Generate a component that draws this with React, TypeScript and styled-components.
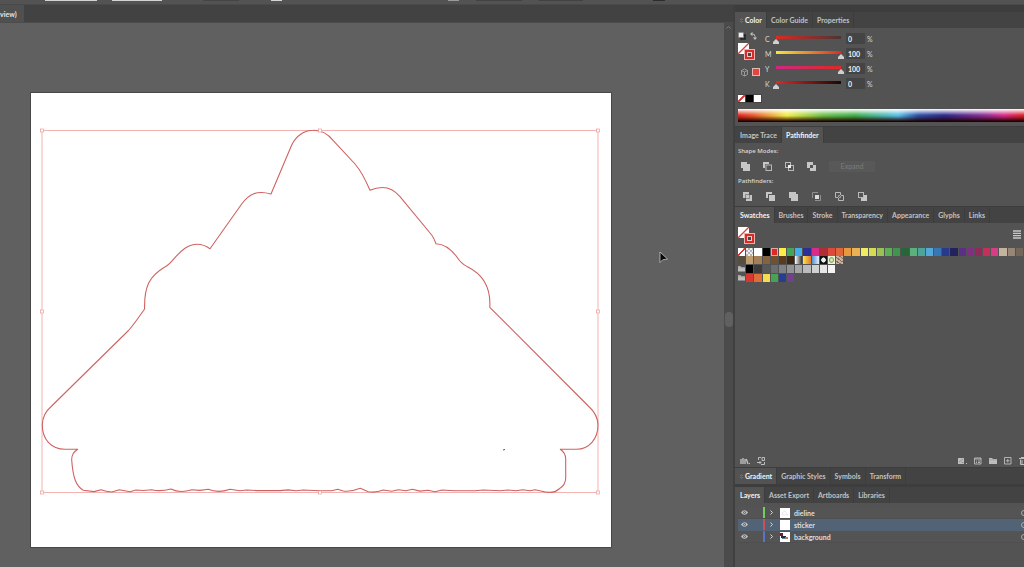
import React from "react";
import styled, { createGlobalStyle } from "styled-components";

const GlobalStyle = createGlobalStyle`
  * { box-sizing: border-box; }
  body { margin: 0; background: #535353; overflow: hidden; }
  button, input { font: inherit; color: inherit; border: 0; padding: 0; margin: 0; background: none; }
`;

const Screen = styled.div`
  display: flex;
  flex-direction: column;
  height: 100vh;
  font: 400 7px/10px Lato, "Open Sans", sans-serif;
  color: #d6d6d6;
`;

const OptionsBar = styled.header`
  display: flex;
  flex: none;
  height: 5px;
  background: #535353;
  border-bottom: 1px solid #4a4a4a;
`;

const OptionField = styled.span<{ $gap: number; $width: number; $color: string }>`
  width: ${(p) => p.$width}px;
  height: 1px;
  margin-left: ${(p) => p.$gap}px;
  background: ${(p) => p.$color};
`;

const Workspace = styled.div`
  display: flex;
  flex: 1;
  min-height: 0;
`;

const DocumentArea = styled.main`
  display: flex;
  flex: 1;
  flex-direction: column;
  min-width: 0;
`;

const DocumentTabs = styled.div`
  display: flex;
  flex: none;
  height: 18px;
  background: #424242;
  border-bottom: 1px solid #4c4c4c;
`;

const DocumentTab = styled.button`
  padding-right: 7px;
  background: #505050;
  color: #e6e6e6;
  font-weight: 700;
`;

const CanvasRow = styled.div`
  display: flex;
  flex: 1;
  min-height: 0;
`;

const Canvas = styled.div`
  position: relative;
  flex: 1;
  min-width: 0;
  padding: 70px 113px 20px 31px;
  overflow: hidden;
  background: #606060;
`;

const Artboard = styled.svg`
  display: block;
  width: 100%;
  background: #fff;
  outline: 1px solid #484848;
`;

const Cursor = styled.svg`
  position: absolute;
  left: 659px;
  top: 228px;
  width: 9px;
  height: 13px;
`;

const ScrollRail = styled.div`
  display: flex;
  flex-direction: column;
  align-items: center;
  justify-content: space-between;
  width: 9px;
  padding: 3px 0 240px;
  background: #4b4b4b;
`;

const ScrollThumb = styled.span`
  width: 8px;
  height: 15px;
  border-radius: 4px;
  background: #606060;
`;

const Dock = styled.aside`
  display: flex;
  flex: none;
  flex-direction: column;
  gap: 1px;
  width: 291px;
  padding-top: 7px;
  border-left: 2px solid #404040;
  background: #3d3d3d;
`;

const Group = styled.section<{ $grow?: boolean; $collapsed?: boolean }>`
  display: flex;
  flex: ${(p) => (p.$grow ? "1" : "none")};
  flex-direction: column;
  min-height: 0;
  padding-bottom: ${(p) => (p.$collapsed ? 2 : 0)}px;
`;

const TabBar = styled.div`
  display: flex;
  flex: none;
  height: 16px;
  background: #434343;
`;

const Tab = styled.button<{ $active: boolean }>`
  display: flex;
  align-items: center;
  gap: 2px;
  padding: 0 4px;
  border-right: 1px solid #3d3d3d;
  background: ${(p) => (p.$active ? "#535353" : "transparent")};
  color: ${(p) => (p.$active ? "#f4f4f4" : "#c2c2c2")};
  font-weight: 700;
  white-space: nowrap;

  &:first-child { padding-left: 5px; }
  &:has(svg) { padding-left: 3px; }
`;

const Body = styled.div<{ $height?: number }>`
  display: flex;
  flex: ${(p) => (p.$height ? "none" : "1")};
  flex-direction: column;
  min-height: 0;
  height: ${(p) => (p.$height ? `${p.$height}px` : "auto")};
  padding: 3px 0 0 3px;
  background: #535353;
`;

const ColorControls = styled.div`
  display: flex;
  gap: 3px;
  height: 63px;
`;

const ColorTools = styled.div`
  display: flex;
  flex-direction: column;
  width: 24px;
  gap: 3px;
`;

const Sliders = styled.div`
  display: flex;
  flex-direction: column;
`;

const SliderRow = styled.div`
  display: flex;
  align-items: center;
  height: 15px;
`;

const SliderLabel = styled.label`
  width: 8px;
`;

const Range = styled.input<{ $from: string; $to: string }>`
  appearance: none;
  width: 71px;
  height: 11px;
  background: linear-gradient(90deg, ${(p) => p.$from}, ${(p) => p.$to}) 3px 3px / calc(100% - 6px) 3px no-repeat;

  &::-webkit-slider-thumb {
    appearance: none;
    width: 6px;
    height: 5px;
    margin-top: 6px;
    background: #d0d0d0;
    clip-path: polygon(50% 0, 100% 60%, 100% 100%, 0 100%, 0 60%);
  }
`;

const NumberBox = styled.input`
  width: 19px;
  height: 11px;
  margin: 0 2px;
  padding-left: 2px;
  background: #444;
  color: #f0f0f0;
  font-weight: 700;
`;

const MiniSwatches = styled.div`
  display: flex;
  gap: 1px;
  width: 24px;
  height: 9px;
  padding-top: 1px;
  background: #444;
`;

const Spectrum = styled.div`
  height: 13px;
  margin-top: 6px;
  background:
    linear-gradient(180deg, #fff 0, #fff0 48%, #0000 52%, #200 95%),
    linear-gradient(90deg, #e0281c 0%, #e8542c 5%, #f3ed42 17%, #6abf49 30%, #3fae49 41%, #55bfe8 56%, #2c50a8 63%, #2c2a8c 72%, #8c2f95 86%, #d92b88 93%, #de2430 99%);
`;

const Caption = styled.span`
  height: 10px;
  font-family: "Open Sans", sans-serif;
  font-size: 6px;
  font-weight: 600;
`;

const IconRow = styled.div<{ $gap: number }>`
  display: flex;
  align-items: center;
  gap: ${(p) => p.$gap}px;
  height: 20px;
  padding-left: ${(p) => (p.$gap === 13 ? 3 : 5)}px;
`;

const IconButton = styled.button`
  display: flex;
  flex: none;

  svg { display: block; }
`;

const ExpandButton = styled.button`
  width: 46px;
  height: 11px;
  background: #585858;
  color: #7c7c7c;
`;

const SwatchHead = styled.div`
  display: flex;
  justify-content: space-between;
  height: 21px;
  padding: 1px 3px 0 0;
`;

const ListViewButton = styled(IconButton)`
  align-items: center;
  height: 14px;
`;

const SwatchGrid = styled.div<{ $spaced?: boolean }>`
  display: grid;
  grid-template-columns: repeat(35, 1fr);
  gap: 1px;
  height: 8px;
  margin: ${(p) => (p.$spaced ? "1px" : "0")} 1px 0 0;
`;

const Swatch = styled.button<{ $fill: string; $selected?: boolean }>`
  height: 8px;
  background: ${(p) => p.$fill};
  outline: ${(p) => (p.$selected ? "1px solid #e9a5a0" : "none")};
  outline-offset: -1px;
`;

const MiniSwatch = styled(Swatch)`
  width: 7px;
  height: 7px;
`;

const SwatchFooter = styled.footer`
  display: flex;
  align-items: center;
  justify-content: space-between;
  height: 13px;
  margin-top: auto;
  padding-left: 2px;
`;

const FooterIcons = styled.div`
  display: flex;
  gap: 7px;
`;

const LayerList = styled.ul`
  margin: 0;
  padding: 1px 0 0;
  list-style: none;
`;

const LayerRow = styled.li<{ $selected: boolean }>`
  display: flex;
  align-items: center;
  height: 12px;
  background: ${(p) => (p.$selected ? "#526376" : "#545454")};
  border-bottom: 1px solid ${(p) => (p.$selected ? "#526376" : "#4f4f4f")};
  color: #dedede;
`;

const EyeCell = styled(IconButton)`
  justify-content: center;
  width: 12px;
`;

const LayerColor = styled.span<{ $color: string }>`
  width: 2px;
  height: 11px;
  margin-left: 13px;
  background: ${(p) => p.$color};
`;

const Disclosure = styled(IconButton)`
  justify-content: center;
  width: 12px;
`;

const LayerThumb = styled.svg`
  width: 10px;
  height: 10px;
  margin: 0 4px 0 3px;
  background: #fff;
`;

const LayerName = styled.span`
  flex: 1;
  font-weight: 700;
`;

const Target = styled.button`
  width: 6px;
  height: 6px;
  margin-right: -3px;
  border: 1px solid #aaa;
  border-radius: 50%;
`;

const none = "linear-gradient(to top left, #fff 42%, #d33 43%, #d33 57%, #fff 58%)";

const optionFields: [number, number, string][] = [
  [45, 52, "#d2d2d2"],
  [15, 50, "#d2d2d2"],
  [41, 36, "#454545"],
  [32, 11, "#d2d2d2"],
  [166, 11, "#9a9a9a"],
  [17, 46, "#424242"],
  [17, 44, "#424242"],
  [70, 12, "#2c2c2c"],
];

const colorRow = [
  none, "repeating-conic-gradient(#b5b5b5 0 25%, #eee 0 50%) 0 0 / 4px 4px", "#fff", "#000", "#dc2a27", "#fbee4b", "#43a557", "#47ade8",
  "#2c3094", "#d82c8b", "#b02f35", "#da4b3c", "#dd663b", "#e8983f", "#edb052", "#f0ec62", "#d5dc52", "#98c251",
  "#5ab055", "#3f964d", "#2a6539", "#5bb07b", "#4da59a", "#56a8db", "#3876b4", "#29398b", "#24225d", "#5c2f86",
  "#822e86", "#96295c", "#c72f59", "#d73c85", "#c4b49f", "#978678", "#71675a",
];

const brownRow = [
  "#594d40", "#bf9e73", "#a27f58", "#84633f", "#705030", "#5a3c1d", "#392613",
  "linear-gradient(90deg,#fff,#333)", "linear-gradient(90deg,#f6e94e,#e8722c)", "linear-gradient(90deg,#4c94d2,#e5eff8)",
  "radial-gradient(#eee 0 40%,#111 50%)", "radial-gradient(#dce7c3 20%,#74aa45 40%,#edf1dc 60%)", "repeating-linear-gradient(35deg,#cab49f 0 2px,#846c58 2px 3px)",
];

const grayRow = ["#000", "#3b3b3b", "#57585a", "#6c6d70", "#808184", "#929395", "#a5a6a9", "#babbbe", "#d0d1d3", "#e6e6e7", "#f4f4f4"];
const brightRow = ["#d93831", "#de6e38", "#f5dc50", "#48a253", "#263e91", "#70418d"];

const channels = [
  { name: "C", value: 0, from: "#dc2a24", to: "#4a3535" },
  { name: "M", value: 100, from: "#f2e83c", to: "#dc2a24" },
  { name: "Y", value: 100, from: "#cf2883", to: "#dc2a24" },
  { name: "K", value: 0, from: "#dc2a24", to: "#1c0707" },
];

const layers = [
  { name: "dieline", color: "#72cf5b", selected: false },
  { name: "sticker", color: "#c9525a", selected: true },
  { name: "background", color: "#5875ce", selected: false },
];

const handles = [
  [42, 130], [320, 130], [598, 130], [42, 311], [598, 311], [42, 492], [320, 492], [598, 492],
];

const outline = `M271 194 L291.7 145 C296 136 304 130.3 313.3 130.3 C322 130 328 134 333.3 140.7
  L355 164 C362 172 366 181 370 190.3 C382 185 392 187 400 196.7 L431.7 235 Q434 238 436 243.7
  C445 244 451 249 456.7 256.7 Q461 263.5 467.5 266.8 C482 274 491 287 489.8 307.3
  L588.3 406 C595 412 598 418 598 425 C598 439 589 449.3 576.7 449.3 H560.3
  Q565.7 453 565.7 459 V478 Q565.7 485 559 489 Q555 492.6 550 492.4
  Q545 492.5 542 491.3 L535 489.7 L530 490.8 L522.7 489.7 L516 490.8 L508 490 L500 490.8 L483 490
  L475 490.7 H454 L442 490 L435 491.7 L428 490.3 L420 491.1 L412.3 489.3 L406 490.7 L398.3 489.7
  L391.7 491.3 L383.3 490 Q376 493 368.3 491.7 L360.3 488.3 Q351 492 343.3 491 L337.7 489.3 L331.7 490.7
  H320 L303.3 490 L296 490.7 L288 489.9 L280 490.6 H257 L246.7 490 L240 490.8 L230 489.2
  Q218 493.5 208.3 489.3 L200 490.4 L191.7 489.7 Q180 493.6 171 489 Q160 491.8 151.7 489.7
  L143.3 490.5 L136 490 L130 491.7 L119.3 489.7 L112 492 Q106 491.4 101 489.7 L94 491.6 L83.3 490.3
  C76 486 73 478 71.7 460 Q71.5 453 77.7 449.3 H65 C51 449.3 42.3 439 42.3 425 Q42.3 414 51.7 406
  L128 331 Q132 327 144.6 309 C144 286 150 276 164 267.5 C172 264 174 256 185 248.3
  C193 243 202 243 210 248.7 L241.7 204 C249 194 257 190 271 194 Z`;

type Shape = "unite" | "front" | "intersect" | "exclude" | "divide" | "trim" | "merge" | "crop" | "outline" | "back";

function PathfinderIcon({ shape }: { shape: Shape }) {
  const light = "#c6c6c6";
  const line = { fill: "none", stroke: "#b8b8b8", strokeWidth: 1 };
  return (
    <svg width="9" height="9" viewBox="0 0 9 9" aria-hidden="true">
      {shape === "unite" && <path d="M0 0h6v2h3v7H2V6H0z" fill={light} />}
      {shape === "front" && (<><path d="M0 0h6v2H2v4H0z" fill={light} /><rect x="3" y="3" width="5.500" height="5.500" {...line} /></>)}
      {shape === "intersect" && (<><rect x=".5" y=".5" width="5" height="5" {...line} /><rect x="3.500" y="3.500" width="5" height="5" {...line} /><path d="M3 3h3v3H3z" fill="#eee" /></>)}
      {shape === "exclude" && <path fillRule="evenodd" d="M0 0h6v3h3v6H3V6H0zM3 3h3v3H3z" fill={light} />}
      {shape === "divide" && (<><path d="M0 0h6v3h3v6H3V6H0z" fill={light} /><path d="M2.500 6V2.500H6M6.500 3v3.500H3" fill="none" stroke="#6c6c6c" strokeWidth=".7" /></>)}
      {shape === "trim" && (<><path d="M0 0h6v2H2v4H0z" fill={light} /><path d="M3 3h6v6H3z" fill={light} /></>)}
      {shape === "merge" && <path d="M0 0h7v2h2v7H2V6H0z" fill={light} />}
      {shape === "crop" && (<><path d="M.5 6V.5H6M8.500 3v5.500H3" fill="none" stroke="#909090" /><path d="M3 3h4v4H3z" fill="#ddd" /></>)}
      {shape === "outline" && (<><path d="M3 5.500H.5v-5h5V3M6 3.500h2.500v5h-5V6" {...line} /><path d="M3.500 5V3.500H5M5.500 4v1.500H4" {...line} strokeWidth=".8" /></>)}
      {shape === "back" && (<><path d="M6 3h3v6H3V6h3z" fill={light} /><rect x=".5" y=".5" width="5" height="5" {...line} /></>)}
    </svg>
  );
}

function FillStroke() {
  return (
    <svg width="17" height="17" viewBox="0 0 17 17" role="img" aria-label="Fill and stroke">
      <rect width="11" height="11" fill="#fff" />
      <path d="M0 11L11 0" stroke="#d6403c" strokeWidth="1.300" />
      <rect x="6" y="6" width="11" height="11" fill="#f0b0ac" />
      <rect x="7" y="7" width="9" height="9" fill="#d92b27" />
      <rect x="9" y="9" width="5" height="5" fill="#f0c8c4" />
      <rect x="10" y="10" width="3" height="3" fill="#484848" />
    </svg>
  );
}

function FolderIcon({ width = 7 }: { width?: number }) {
  return (
    <svg width={width} height="7" viewBox="0 0 8 7" aria-hidden="true">
      <path d="M0 1h3l1 1h4v5H0z" fill="#bdbdbd" />
      <path d="M0 2.800h8" stroke="#888" strokeWidth=".4" />
    </svg>
  );
}

function Tabs({ names, active, toggle }: { names: string[]; active: string; toggle?: boolean }) {
  return (
    <TabBar role="tablist">
      {names.map((name, i) => (
        <Tab key={name} role="tab" aria-selected={name === active} $active={name === active}>
          {toggle && i === 0 && (
            <svg width="3" height="5" viewBox="0 0 3 5" aria-hidden="true">
              <path d="M.3 2L1.500.7 2.700 2M.3 3L1.500 4.300 2.700 3" fill="none" stroke="#999" strokeWidth=".6" />
            </svg>
          )}
          {name}
        </Tab>
      ))}
    </TabBar>
  );
}

function ColorPanel() {
  return (
    <Group>
      <Tabs names={["Color", "Color Guide", "Properties"]} active="Color" toggle />
      <Body $height={98}>
        <ColorControls>
          <ColorTools>
            <svg width="20" height="9" viewBox="0 0 20 9" aria-hidden="true">
              <rect x="3" y="4" width="4" height="4" fill="none" stroke="#222" strokeWidth="1.500" />
              <rect x=".5" y="1.500" width="5" height="5" fill="#eee" stroke="#777" strokeWidth=".5" />
              <path d="M13 3h1.500q2.500 0 2.500 2.500V8" fill="none" stroke="#bbb" />
              <path d="M14.500 .8v4.400L12 3zM14.800 6.500h4.400L17 9z" fill="#bbb" />
            </svg>
            <FillStroke />
            <svg width="24" height="18" viewBox="0 0 24 18" aria-hidden="true">
              <path d="M6.500 6L9.500 7.500v4L6.500 13 3.500 11.500v-4zM3.500 7.500L6.500 9l3-1.500M6.500 9v4" fill="none" stroke="#aaa" strokeWidth=".8" />
              <rect x="14.500" y="5.500" width="7" height="7" fill="#e24640" stroke="#eab4b0" />
            </svg>
          </ColorTools>
          <Sliders>
            {channels.map((c) => (
              <SliderRow key={c.name}>
                <SliderLabel htmlFor={`channel-${c.name}`}>{c.name}</SliderLabel>
                <Range id={`channel-${c.name}`} type="range" min={0} max={100} defaultValue={c.value} $from={c.from} $to={c.to} />
                <NumberBox aria-label={`${c.name} percent`} defaultValue={c.value} />
                %
              </SliderRow>
            ))}
          </Sliders>
        </ColorControls>
        <MiniSwatches>
          <MiniSwatch $fill={none} aria-label="None" />
          <MiniSwatch $fill="#000" aria-label="Black" />
          <MiniSwatch $fill="#fff" aria-label="White" />
        </MiniSwatches>
        <Spectrum />
      </Body>
    </Group>
  );
}

function PathfinderPanel() {
  const modes: Shape[] = ["unite", "front", "intersect", "exclude"];
  const finders: Shape[] = ["divide", "trim", "merge", "crop", "outline", "back"];
  return (
    <Group>
      <Tabs names={["Image Trace", "Pathfinder"]} active="Pathfinder" />
      <Body $height={63}>
        <Caption>Shape Modes:</Caption>
        <IconRow $gap={13}>
          {modes.map((m) => (
            <IconButton key={m} aria-label={m}><PathfinderIcon shape={m} /></IconButton>
          ))}
          <ExpandButton disabled>Expand</ExpandButton>
        </IconRow>
        <Caption>Pathfinders:</Caption>
        <IconRow $gap={14}>
          {finders.map((m) => (
            <IconButton key={m} aria-label={m}><PathfinderIcon shape={m} /></IconButton>
          ))}
        </IconRow>
      </Body>
    </Group>
  );
}

function SwatchesPanel() {
  return (
    <Group $grow>
      <Tabs names={["Swatches", "Brushes", "Stroke", "Transparency", "Appearance", "Glyphs", "Links"]} active="Swatches" />
      <Body>
        <SwatchHead>
          <FillStroke />
          <ListViewButton aria-label="List view">
            <svg width="8" height="9" viewBox="0 0 8 9" aria-hidden="true">
              <path d="M0 1h8M0 3.300h8M0 5.600h8M0 8h8" stroke="#c8c8c8" strokeWidth="1.300" />
            </svg>
          </ListViewButton>
        </SwatchHead>
        <SwatchGrid $spaced>
          {colorRow.map((c, i) => <Swatch key={i} $fill={c} $selected={i === 4} aria-label={`Swatch ${i + 1}`} />)}
        </SwatchGrid>
        <SwatchGrid>
          {brownRow.map((c, i) => <Swatch key={i} $fill={c} aria-label={`Swatch ${i + 36}`} />)}
        </SwatchGrid>
        <SwatchGrid $spaced>
          <FolderIcon />
          {grayRow.map((c) => <Swatch key={c} $fill={c} aria-label={`Gray ${c}`} />)}
        </SwatchGrid>
        <SwatchGrid $spaced>
          <FolderIcon />
          {brightRow.map((c) => <Swatch key={c} $fill={c} aria-label={`Bright ${c}`} />)}
        </SwatchGrid>
        <SwatchFooter>
          <FooterIcons>
            <IconButton aria-label="Swatch libraries">
              <svg width="10" height="8" viewBox="0 0 10 8">
                <path d="M1 2v5M3 1v6M5 2v5M6.300 2L8 7" stroke="#bdbdbd" strokeWidth="1.400" />
                <path d="M9 6h1v1H9z" fill="#bdbdbd" />
              </svg>
            </IconButton>
            <IconButton aria-label="Add to library">
              <svg width="8" height="8" viewBox="0 0 8 8">
                <path d="M1.500 3V.5H4M5 .5h2.500v3H5zM4 7.500h3.500V5M0 5.500h4M2.500 4L4 5.500 2.500 7" fill="none" stroke="#bdbdbd" />
              </svg>
            </IconButton>
          </FooterIcons>
          <FooterIcons>
            <IconButton aria-label="Show swatch kinds">
              <svg width="9" height="8" viewBox="0 0 9 8">
                <path d="M0 1h6v6H0z" fill="#bdbdbd" />
                <path d="M1 5l4-3M3.500 5.500h2" stroke="#888" strokeWidth=".8" />
                <path d="M8 6h1v1H8z" fill="#bdbdbd" />
              </svg>
            </IconButton>
            <IconButton aria-label="Swatch options">
              <svg width="8" height="8" viewBox="0 0 8 8">
                <path d="M.5 1h6.500v6H.5zM.5 2h6.500M2 4h1M4 4h2M2 5.500h1M4 5.500h2" fill="none" stroke="#bdbdbd" strokeWidth=".9" />
              </svg>
            </IconButton>
            <IconButton aria-label="New color group"><FolderIcon width={8} /></IconButton>
            <IconButton aria-label="New swatch">
              <svg width="8" height="8" viewBox="0 0 8 8">
                <path d="M.5 .5h6.500v6.500h-6.500zM3.800 2v3.500M2 3.800h3.500" fill="none" stroke="#bdbdbd" strokeWidth=".9" />
              </svg>
            </IconButton>
            <IconButton aria-label="Delete swatch">
              <svg width="5" height="8" viewBox="0 0 5 8">
                <path d="M0 1.500h5M1.500 2.500v5H5M3 3v4M2 .5h3" fill="none" stroke="#bdbdbd" />
              </svg>
            </IconButton>
          </FooterIcons>
        </SwatchFooter>
      </Body>
    </Group>
  );
}

function LayersPanel() {
  return (
    <Group>
      <Tabs names={["Layers", "Asset Export", "Artboards", "Libraries"]} active="Layers" />
      <Body $height={64}>
        <LayerList>
          {layers.map((l) => (
            <LayerRow key={l.name} $selected={l.selected}>
              <EyeCell aria-label={`Toggle ${l.name}`}>
                <svg width="7" height="5" viewBox="0 0 7 5">
                  <path d="M0 2.500Q3.500-2 7 2.500 3.500 7 0 2.500z" fill="#c4c4c4" />
                  <circle cx="3.500" cy="2.500" r="1.300" fill="#555" />
                  <circle cx="3.500" cy="2.500" r=".5" fill="#ccc" />
                </svg>
              </EyeCell>
              <LayerColor $color={l.color} />
              <Disclosure aria-label={`Expand ${l.name}`}>
                <svg width="3" height="5" viewBox="0 0 3 5">
                  <path d="M.5 .5l2 2-2 2" fill="none" stroke="#d6d6d6" />
                </svg>
              </Disclosure>
              <LayerThumb viewBox="0 0 10 10" aria-hidden="true">
                {l.name === "dieline" && <path d="M2 7l1-3 2-1 3 4z" fill="none" stroke="#d5dbe4" strokeWidth=".6" />}
                {l.name === "background" && (
                  <>
                    <path d="M0 1h3v3H0z" fill="#6c2029" />
                    <path d="M1 4h5v2H1z" fill="#222b40" />
                    <path d="M2 6h3v1H2z" fill="#4c82b4" />
                    <path d="M5 5h3v2H5z" fill="#cf7442" />
                  </>
                )}
              </LayerThumb>
              <LayerName>{l.name}</LayerName>
              <Target aria-label={`Target ${l.name}`} />
            </LayerRow>
          ))}
        </LayerList>
      </Body>
    </Group>
  );
}

export default function App() {
  return (
    <>
      <GlobalStyle />
      <Screen>
        <OptionsBar>
          {optionFields.map(([gap, width, color], i) => (
            <OptionField key={i} $gap={gap} $width={width} $color={color} />
          ))}
        </OptionsBar>
        <Workspace>
          <DocumentArea>
            <DocumentTabs>
              <DocumentTab>view)</DocumentTab>
            </DocumentTabs>
            <CanvasRow>
              <Canvas>
                <Artboard viewBox="31 93 580 454" role="img" aria-label="Sticker outline">
                  <rect x="42" y="130.500" width="556" height="362" fill="none" stroke="#f2b4b2" />
                  <path d={outline} fill="none" stroke="#cf6361" strokeWidth="1.100" strokeLinejoin="round" />
                  <path d="M503 450l2-.5" stroke="#a33" />
                  {handles.map(([x, y]) => (
                    <rect key={`${x}-${y}`} x={x - 1.5} y={y - 1} width="3" height="3" fill="#fff" stroke="#ea9a98" strokeWidth=".7" />
                  ))}
                </Artboard>
                <Cursor viewBox="0 0 9 13" aria-hidden="true">
                  <path d="M1 1v10.500l2.700-2.700L8.500 8z" fill="#080808" stroke="#c8c8c8" strokeWidth=".8" />
                </Cursor>
              </Canvas>
              <ScrollRail>
                <svg width="5" height="3" viewBox="0 0 5 3" aria-hidden="true">
                  <path d="M.5 2.500l2-2 2 2" fill="none" stroke="#8a8a8a" strokeWidth=".8" />
                </svg>
                <ScrollThumb />
              </ScrollRail>
            </CanvasRow>
          </DocumentArea>
          <Dock>
            <ColorPanel />
            <PathfinderPanel />
            <SwatchesPanel />
            <Group $collapsed>
              <Tabs names={["Gradient", "Graphic Styles", "Symbols", "Transform"]} active="Gradient" toggle />
            </Group>
            <LayersPanel />
          </Dock>
        </Workspace>
      </Screen>
    </>
  );
}
